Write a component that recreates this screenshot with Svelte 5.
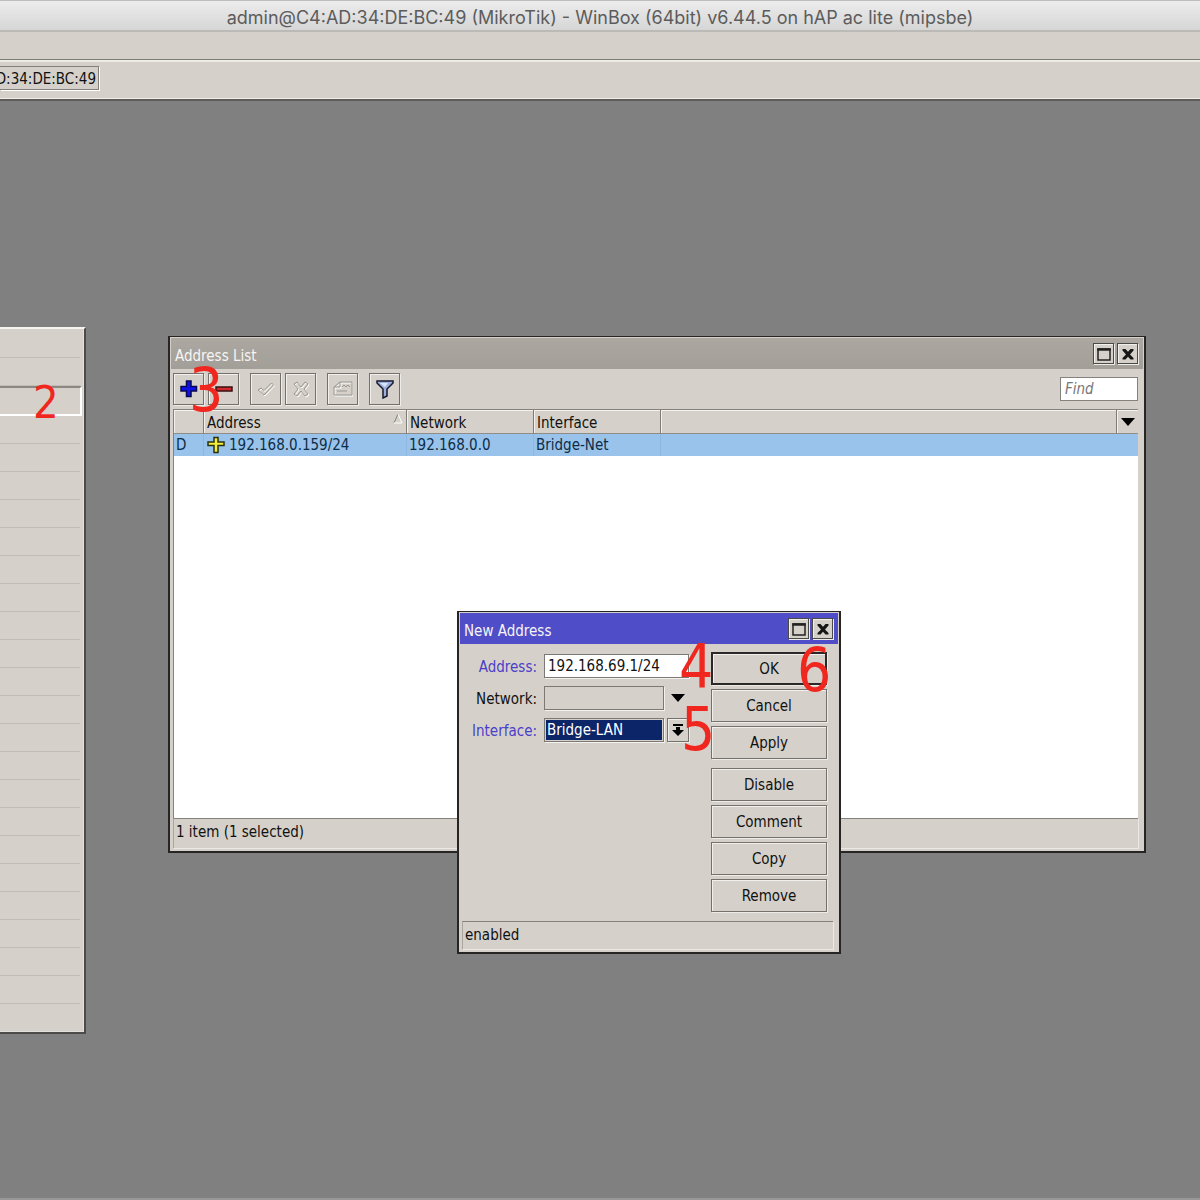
<script lang="ts">
	type Address = { flag: string; address: string; network: string; iface: string };

	const addresses: Address[] = [
		{ flag: 'D', address: '192.168.0.159/24', network: '192.168.0.0', iface: 'Bridge-Net' }
	];

	const menuRows = Array.from({ length: 25 }, (_, i) => i);
	const activeRow = 2;

	const actions = [
		['OK', 'Cancel', 'Apply'],
		['Disable', 'Comment', 'Copy', 'Remove']
	];

	let find = $state('');
	let address = $state('192.168.69.1/24');
	let iface = $state('Bridge-LAN');
</script>

{#snippet windowButtons()}
	<div class="window-buttons">
		<button type="button" aria-label="Maximize">
			<svg width="18" height="18" viewBox="0 0 18 18">
				<path d="M3 4h12v11H3z" fill="#d5d1ca" stroke="#222" stroke-width="1.5" />
				<path d="M2.3 4.5h13.4" stroke="#222" stroke-width="2.5" />
			</svg>
		</button>
		<button type="button" aria-label="Close">
			<svg width="18" height="18" viewBox="0 0 18 18">
				<path d="M3.500 4h3L9 6.800 11.500 4h3v1.500L11 9.500l3.500 3.500v1.500h-3L9 11.700 6.500 14.500h-3V13L7 9.500 3.500 5.500z" fill="#161616" />
			</svg>
		</button>
	</div>
{/snippet}

<div class="app">
	<header class="title">admin@C4:AD:34:DE:BC:49 (MikroTik) - WinBox (64bit) v6.44.5 on hAP ac lite (mipsbe)</header>
	<div class="menubar"></div>
	<div class="session">
		<output>C4:AD:34:DE:BC:49</output>
	</div>

	<main class="desktop">
		<ul class="side-menu">
			{#each menuRows as row}
				<li class:active={row === activeRow}></li>
			{/each}
		</ul>

		<section class="window list-window">
			<div class="bar">
				<h2>Address List</h2>
				{@render windowButtons()}
			</div>

			<div class="toolbar">
				<button aria-label="Add">
					<svg width="20" height="20" viewBox="0 0 20 20">
						<path d="M7.500 2h4.500v5.500h5.500v4.500H12v5.500H7.500V12H2V7.500h5.500z" fill="#1010e8" stroke="#080850" stroke-width="1.500" />
					</svg>
				</button>
				<button aria-label="Remove">
					<svg width="20" height="20" viewBox="0 0 20 20">
						<path d="M2 8h16v4H2z" fill="#d02c30" stroke="#3a1010" stroke-width="1.500" />
					</svg>
				</button>
				<button class="group" aria-label="Enable">
					<svg width="20" height="20" viewBox="0 0 20 20" fill="none">
						<path d="M2 11l3-2 3 2.500L15.500 4l2 2L8 16z" stroke="#fff" transform="translate(1 1)" />
						<path d="M2 11l3-2 3 2.500L15.500 4l2 2L8 16z" stroke="#9a9791" />
					</svg>
				</button>
				<button aria-label="Disable">
					<svg width="20" height="20" viewBox="0 0 20 20" fill="none">
						<path d="M3 5l3-2 4 5 4-5 3 2-4 5 4 5-3 2-4-5-4 5-3-2 4-5z" stroke="#fff" transform="translate(1 1)" />
						<path d="M3 5l3-2 4 5 4-5 3 2-4 5 4 5-3 2-4-5-4 5-3-2 4-5z" stroke="#9a9791" />
					</svg>
				</button>
				<button class="group" aria-label="Comment">
					<svg width="20" height="20" viewBox="0 0 20 20" fill="none">
						<path d="M1 8l6-5h12v13H1zM7 3v5H1" stroke="#fff" transform="translate(1 1)" />
						<path d="M1 8l6-5h12v13H1zM7 3v5H1M9 8l2-2 2 2 2-2 2 2M4 12h10" stroke="#9a9791" />
					</svg>
				</button>
				<button class="group" aria-label="Filter">
					<svg width="20" height="20" viewBox="0 0 20 20">
						<path d="M2 2h16v2l-6 6v7l-4 2v-9L2 4z" fill="#9fb0de" stroke="#151a2c" stroke-width="1.500" />
						<path d="M5 4h8l-3 4z" fill="#dce4fa" />
					</svg>
				</button>
				<input class="find" type="text" placeholder="Find" aria-label="Find" bind:value={find} />
			</div>

			<div class="grid">
				<table>
					<colgroup>
						<col class="c-flag" /><col class="c-address" /><col class="c-network" /><col class="c-network" /><col /><col class="c-menu" />
					</colgroup>
					<thead>
						<tr>
							<th></th>
							<th>
								<div class="sorted">
									Address
									<svg width="10" height="12" viewBox="0 0 10 12" fill="none">
										<path d="M1 10L5 1" stroke="#85827d" />
										<path d="M5 1l4 9H1" stroke="#fff" />
									</svg>
								</div>
							</th>
							<th>Network</th>
							<th>Interface</th>
							<th></th>
							<th>
								<button class="columns" aria-label="Columns">
									<svg width="14" height="8" viewBox="0 0 14 8"><path d="M0 0h14L7 8z" /></svg>
								</button>
							</th>
						</tr>
					</thead>
					<tbody>
						{#each addresses as row}
							<tr>
								<td>{row.flag}</td>
								<td>
									<div class="addr">
										<svg width="18" height="18" viewBox="0 0 18 18">
											<path d="M7 1.500h4V6h6v3.500h-6v7H7v-7H1V6h6z" fill="#f4ee38" stroke="#28300f" stroke-width="1.500" />
										</svg>
										{row.address}
									</div>
								</td>
								<td>{row.network}</td>
								<td>{row.iface}</td>
								<td colspan="2"></td>
							</tr>
						{/each}
					</tbody>
				</table>
			</div>
			<footer>1 item (1 selected)</footer>
		</section>

		<form class="window dialog" onsubmit={(e) => e.preventDefault()}>
			<div class="bar">
				<h2>New Address</h2>
				{@render windowButtons()}
			</div>
			<div class="body">
				<div class="fields">
					<label class="changed" for="address">Address:</label>
					<input class="wide" id="address" type="text" bind:value={address} />

					<label for="network">Network:</label>
					<input id="network" type="text" disabled />
					<button type="button" class="expand" aria-label="Expand network">
						<svg width="14" height="8" viewBox="0 0 14 8"><path d="M0 0h14L7 8z" /></svg>
					</button>

					<label class="changed" for="interface">Interface:</label>
					<select id="interface" bind:value={iface}>
						<option>Bridge-LAN</option>
						<option>Bridge-Net</option>
					</select>
					<button type="button" class="drop" aria-label="Open interfaces">
						<svg width="12" height="14" viewBox="0 0 12 14"><path d="M1 1h10v2H1zM4 4h4v3h4l-6 6-6-6h4z" /></svg>
					</button>
				</div>
				<div class="actions">
					{#each actions as group}
						<div class="action-group">
							{#each group as action}
								<button type="button" class:default={action === 'OK'}>{action}</button>
							{/each}
						</div>
					{/each}
				</div>
			</div>
			<footer>enabled</footer>
		</form>

		<span class="step small s2">2</span>
		<span class="step s3">3</span>
		<span class="step s4">4</span>
		<span class="step s5">5</span>
		<span class="step s6">6</span>
	</main>
</div>

<style>
	:global(body) {
		margin: 0;
	}

	.app,
	.app * {
		box-sizing: border-box;
	}

	.app {
		min-height: 100vh;
		display: flex;
		flex-direction: column;
		overflow: hidden;
		background: #808080;
		color: #111;
		font: 15px/20px "DejaVu Sans Condensed", "DejaVu Sans", Tahoma, sans-serif;
	}

	button,
	input,
	select {
		margin: 0;
		padding: 0;
		font: inherit;
		color: inherit;
		border-radius: 0;
	}

	button {
		display: flex;
		align-items: center;
		justify-content: center;
		background: #d5d1ca;
		border: 1px solid #74716c;
		box-shadow: inset 1px 1px #f2f0ec, 1px 1px #eeece8;
	}

	svg {
		display: block;
		flex: none;
	}

	.title {
		height: 32px;
		padding-top: 2px;
		border-top: 1px solid #bdbdbd;
		border-bottom: 2px solid #bcbab7;
		background: linear-gradient(#ececec, #d6d6d6);
		color: #5c5c5c;
		font: 18px/30px Inter, sans-serif;
		text-align: center;
		white-space: nowrap;
	}

	.menubar {
		height: 28px;
		background: #d5d1ca;
		border-bottom: 1px solid #807d79;
	}

	.session {
		height: 41px;
		padding-top: 4px;
		background: #d5d1ca;
		border-top: 2px solid #edebe5;
		border-bottom: 2px solid #5e5c59;
		box-shadow: inset 0 -1px #efede8;
	}

	.session output {
		display: flex;
		justify-content: flex-end;
		width: 99px;
		height: 24px;
		padding: 2px 2px 0 0;
		overflow: hidden;
		white-space: nowrap;
		border: 1px solid #83807b;
		border-left: 0;
		box-shadow: 1px 1px #fff;
	}

	.desktop {
		position: relative;
		flex: 1;
		border-bottom: 2px solid #989898;
	}

	.side-menu {
		position: absolute;
		top: 226px;
		left: 0;
		width: 86px;
		margin: 0;
		padding: 1px 4px 0 0;
		list-style: none;
		background: #d5d1ca;
		border-top: 2px solid #f4f3f0;
		border-right: 2px solid #4c4b49;
		border-bottom: 2px solid #4c4b49;
		box-shadow: inset -1px -1px #e2e0dc;
	}

	.side-menu li {
		height: 28px;
		border-bottom: 1px solid #c0bcb6;
	}

	.side-menu li:last-child {
		border-bottom: 0;
	}

	.side-menu li.active {
		height: 30px;
		margin-right: -2px;
		border: 2px solid #fff;
		border-top-color: #8b8883;
		border-left: 0;
	}

	.window {
		position: absolute;
		display: flex;
		flex-direction: column;
		padding: 1px;
		background: #d5d1ca;
		border: 2px solid #262523;
		border-top-width: 1px;
	}

	.list-window {
		top: 235px;
		left: 168px;
		width: 978px;
		height: 517px;
	}

	.bar {
		display: flex;
		align-items: center;
		justify-content: space-between;
		height: 31px;
		padding: 0 5px 0 4px;
		background: linear-gradient(#aca7a1, #a29e98);
		color: #f6f5f3;
	}

	h2 {
		margin: 0;
		padding-top: 4px;
		font: inherit;
	}

	.window-buttons {
		display: flex;
		gap: 3px;
	}

	.window-buttons button {
		width: 21px;
		height: 21px;
		color: #111;
		border-color: #4c4a47;
	}

	.toolbar {
		display: flex;
		align-items: flex-start;
		gap: 4px;
		height: 40px;
		padding: 4px 5px 0 2px;
	}

	.toolbar button {
		width: 31px;
		height: 32px;
	}

	.toolbar .group {
		margin-left: 7px;
	}

	.find {
		width: 78px;
		height: 24px;
		margin: 4px 0 0 auto;
		padding: 0 4px;
		background: #fff;
		border: 1px solid #85827d;
		font-style: italic;
	}

	.find::placeholder {
		color: #777;
		opacity: 1;
	}

	.grid {
		flex: 1;
		margin: 0 5px 0 2px;
		background: #fff;
		border-top: 1px solid #85827d;
		border-left: 1px solid #85827d;
	}

	table {
		width: 100%;
		table-layout: fixed;
		border-collapse: separate;
		border-spacing: 0;
	}

	.c-flag {
		width: 30px;
	}

	.c-address {
		width: 203px;
	}

	.c-network {
		width: 127px;
	}

	.c-menu {
		width: 21px;
	}

	th {
		height: 24px;
		padding: 2px 3px 0;
		background: #d5d1ca;
		border-right: 1px solid #807d78;
		border-bottom: 1px solid #908d88;
		box-shadow: inset 1px 1px #f4f2ef;
		font-weight: normal;
		text-align: left;
	}

	th:last-child {
		padding: 0;
		border-right: 0;
	}

	.sorted {
		display: flex;
		justify-content: space-between;
	}

	.columns {
		width: 100%;
		height: 22px;
		background: none;
		border: 0;
		box-shadow: none;
	}

	td {
		height: 22px;
		padding: 0 2px;
		background: #99c3ea;
		border-right: 1px solid #8fb8de;
		color: #0c2d48;
	}

	td:last-child {
		border-right: 0;
	}

	.addr {
		display: flex;
		align-items: center;
		gap: 4px;
		padding-left: 1px;
	}

	footer {
		height: 28px;
		margin: 0 5px 2px 2px;
		padding: 3px 2px;
		border-top: 1px solid #85827d;
		border-left: 1px solid #a8a59f;
		box-shadow: 1px 1px #ebe9e5;
	}

	.list-window footer {
		height: 30px;
	}

	.dialog {
		top: 510px;
		left: 457px;
		width: 384px;
		height: 343px;
	}

	.dialog .bar {
		background: #504dc8;
	}

	.body {
		display: flex;
		flex: 1;
		justify-content: space-between;
		padding: 8px 11px 0 5px;
	}

	.fields {
		display: grid;
		grid-template-columns: 72px 124px 22px;
		grid-auto-rows: 24px;
		gap: 8px 3px;
		padding-top: 2px;
	}

	.fields label {
		padding: 3px 0 0;
		text-align: right;
	}

	.fields .changed {
		color: #4a40c8;
	}

	.fields input,
	.fields select {
		min-width: 0;
		margin-left: 4px;
		padding: 0 3px;
		background: #fff;
		border: 1px solid #7c7975;
		box-shadow: 1px 1px #f4f2ef;
	}

	.fields .wide {
		grid-column: 2 / 4;
	}

	.fields input:disabled {
		background: #d5d1ca;
	}

	.fields select {
		appearance: none;
		padding: 0 2px;
		background: #0c2468;
		color: #fff;
		outline: 1px solid #d5d1ca;
		outline-offset: -2px;
	}

	.fields .expand {
		background: none;
		border: 0;
		box-shadow: none;
	}

	.actions {
		display: flex;
		flex-direction: column;
		gap: 9px;
		width: 116px;
	}

	.action-group {
		display: flex;
		flex-direction: column;
		gap: 4px;
	}

	.actions button {
		height: 33px;
	}

	.actions .default {
		border: 2px solid #2a2927;
	}

	.step {
		position: absolute;
		color: #f0271f;
		font-size: 60px;
		line-height: 60px;
	}

	.small {
		font-size: 45px;
	}

	.s2 {
		top: 272px;
		left: 33px;
	}

	.s3 {
		top: 259px;
		left: 189px;
	}

	.s4 {
		top: 535px;
		left: 679px;
	}

	.s5 {
		top: 598px;
		left: 681px;
	}

	.s6 {
		top: 539px;
		left: 797px;
	}
</style>
